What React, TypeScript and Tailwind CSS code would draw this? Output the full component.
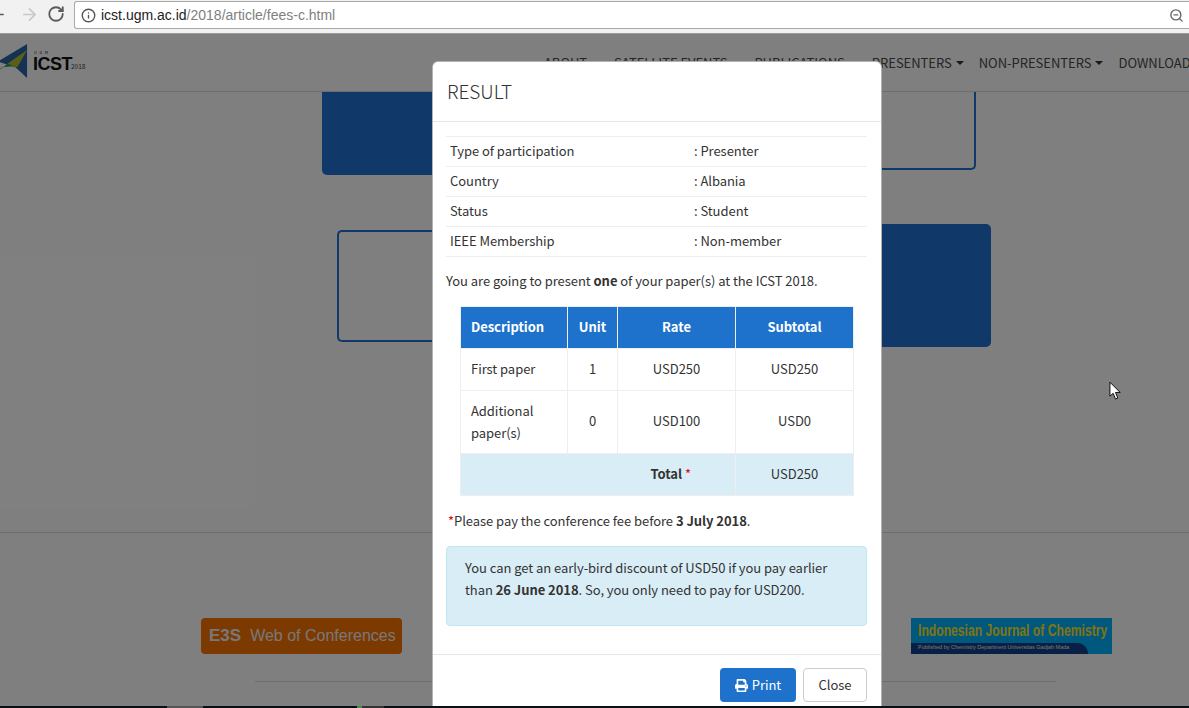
import { ArrowLeft, ArrowRight, Info, RotateCw, ZoomOut } from 'lucide-react'
import { FaPrint } from 'react-icons/fa'

const infoRows = [
  ['Type of participation', ': Presenter'],
  ['Country', ': Albania'],
  ['Status', ': Student'],
  ['IEEE Membership', ': Non-member'],
]

const navItems = [
  { label: 'ABOUT', caret: true },
  { label: 'SATELLITE EVENTS', caret: true },
  { label: 'PUBLICATIONS', caret: true },
  { label: 'PRESENTERS', caret: true },
  { label: 'NON-PRESENTERS', caret: true },
  { label: 'DOWNLOAD', caret: false },
]

function BrowserBar() {
  return (
    <div className="h-[34px] shrink-0 bg-[#f1f1f1] border-b border-[#9c9c9c] flex items-start">
      <div className="w-[74px] h-[28px] shrink-0 flex items-center relative">
        <ArrowLeft className="absolute left-[-12px] top-[5px] w-[19px] h-[19px] text-[#5a5a5a]" strokeWidth={2.2} />
        <ArrowRight className="absolute left-[20px] top-[5px] w-[19px] h-[19px] text-[#c8c8c8]" strokeWidth={2.2} />
        <RotateCw className="absolute left-[47px] top-[5px] w-[18px] h-[18px] text-[#5a5a5a]" strokeWidth={2.4} />
      </div>
      <div className="flex-1 h-[28px] mt-px bg-white border border-[#a9a9a9] border-r-0 rounded-l-[3px] flex items-center pl-[6px] pr-[5px] font-['Liberation_Sans',sans-serif] text-[14px]">
        <Info className="w-[15px] h-[15px] text-[#555] shrink-0" strokeWidth={2.2} />
        <span className="ml-[5px] text-[#222]">icst.ugm.ac.id</span>
        <span className="text-[#808080]">/2018/article/fees-c.html</span>
        <ZoomOut className="ml-auto w-[15px] h-[15px] text-[#666]" strokeWidth={2.2} />
      </div>
    </div>
  )
}

function Logo() {
  return (
    <div className="w-[90px] h-full shrink-0 relative">
      <svg viewBox="0 0 30 36" className="absolute left-0 top-[10px] w-[29px] h-[35px]">
        <path d="M-2 18 L28 0 L28 35 L16 24 Z" fill="#2a62a8" />
        <path d="M8 20 L28 6 L18 24 L12 23 Z" fill="#b5bf2e" />
        <path d="M-3 29 L8 20 L14 23 L2 24 Z" fill="#2f9e5b" />
      </svg>
      <span className="absolute left-[34px] top-[16px] text-[4px] leading-[5px] tracking-[2.5px] text-[#222]">UGM</span>
      <span className="absolute left-[33px] top-[18px] text-[18px] leading-[24px] font-bold tracking-[-0.5px] text-[#111] font-['Liberation_Sans',sans-serif]">ICST</span>
      <span className="absolute left-[71px] top-[26px] text-[6.5px] leading-[12px] text-[#444]">2018</span>
    </div>
  )
}

function PageBehind() {
  return (
    <div className="absolute inset-0 bg-white flex flex-col">
      <div className="h-[58px] shrink-0 border-b border-[#ddd] flex items-center">
        <Logo />
        <div className="ml-[454px] mt-px flex items-center gap-[15px] shrink-0 whitespace-nowrap text-[13px] tracking-[-0.03px] text-[#4a4a4a]">
          {navItems.map((item) => (
            <span key={item.label} className="flex items-center gap-[4px]">
              {item.label}
              {item.caret && (
                <span className="w-0 h-0 border-x-[4.5px] border-x-transparent border-t-[4.5px] border-t-[#333]" />
              )}
            </span>
          ))}
        </div>
      </div>

      <div className="flex pl-[322px]">
        <div className="w-[328px] h-[83px] bg-[#2072d4] rounded-bl-[5px]" />
        <div className="w-[326px] h-[78px] border-2 border-t-0 border-[#1f74d0] rounded-br-[5px]" />
      </div>

      <div className="flex items-center pl-[337px] mt-[49px]">
        <div className="w-[313px] h-[112px] border-2 border-r-0 border-[#1f74d0] rounded-l-[5px]" />
        <div className="w-[341px] h-[123px] bg-[#2072d4] rounded-r-[5px]" />
      </div>

      <div className="mt-[185px] border-t border-[#ddd] pt-[85px] pl-[201px] pr-[77px] flex justify-between">
        <div className="w-[201px] h-[36px] rounded-[4px] bg-[#f97200] flex items-center pl-[8px] font-['Liberation_Sans',sans-serif]">
          <span className="text-[17px] font-bold text-[#f0f0f0]">E3S</span>
          <span className="ml-[9px] text-[16px] whitespace-nowrap text-[#f0f0f0]">Web of Conferences</span>
        </div>
        <div className="w-[201px] h-[36px] bg-[#00b0ff] relative overflow-hidden font-['Liberation_Sans',sans-serif]">
          <div className="absolute left-0 bottom-0 w-[177px] h-[11px] bg-[#10408c] rounded-tr-[40px]" />
          <div className="absolute left-[7px] top-[5px] text-[16px] leading-[16px] font-bold text-[#ffe820] whitespace-nowrap origin-left scale-x-[0.76]">Indonesian Journal of Chemistry</div>
          <div className="absolute left-[7px] top-[26px] text-[5.5px] leading-[7px] text-[#e8e8e8] whitespace-nowrap">Published by Chemistry Department Universitas Gadjah Mada</div>
        </div>
      </div>

      <div className="mt-[27px] ml-[255px] w-[801px] border-t border-[#ddd]" />
    </div>
  )
}

function ResultModal() {
  return (
    <div className="absolute left-[432px] top-[27px] w-[450px] h-[700px] bg-white border border-black/30 rounded-[6px] text-[#333] text-[13px] leading-[22px] tracking-[-0.05px]">
      <div className="h-[60px] border-b border-[#e5e5e5] flex items-center pl-[14px] pb-[2px]">
        <h4 className="text-[19px] font-light text-[#333]">RESULT</h4>
      </div>

      <div className="pl-[13px] pr-[14px] pt-[14px]">
        <table className="w-[421px] border-collapse">
          <tbody>
            {infoRows.map(([label, value]) => (
              <tr key={label} className="h-[30px] border-y border-[#eee]">
                <td className="w-[248px] pl-[4px] pt-0 pb-[2px]">{label}</td>
                <td className="pt-0 pb-[2px]">{value}</td>
              </tr>
            ))}
          </tbody>
        </table>

        <p className="mt-[13px]">
          You are going to present <b>one</b> of your paper(s) at the ICST 2018.
        </p>

        <table className="ml-[14px] mt-[14px] w-[394px] border-collapse table-fixed">
          <thead>
            <tr className="h-[42px] bg-[#1e72cc] text-white font-bold">
              <th className="w-[107px] px-[10px] pb-[2px] text-left border border-[#eee]">Description</th>
              <th className="w-[50px] pb-[2px] border border-[#eee]">Unit</th>
              <th className="w-[118px] pb-[2px] border border-[#eee]">Rate</th>
              <th className="pb-[2px] border border-[#eee]">Subtotal</th>
            </tr>
          </thead>
          <tbody>
            <tr className="h-[42px]">
              <td className="px-[10px] pb-[2px] border border-[#eee]">First paper</td>
              <td className="text-center pb-[2px] border border-[#eee]">1</td>
              <td className="text-center pb-[2px] border border-[#eee]">USD250</td>
              <td className="text-center pb-[2px] border border-[#eee]">USD250</td>
            </tr>
            <tr className="h-[63px]">
              <td className="px-[10px] border border-[#eee]">Additional paper(s)</td>
              <td className="text-center pb-[2px] border border-[#eee]">0</td>
              <td className="text-center pb-[2px] border border-[#eee]">USD100</td>
              <td className="text-center pb-[2px] border border-[#eee]">USD0</td>
            </tr>
            <tr className="h-[42px] bg-[#d9edf7]">
              <td colSpan={3} className="text-right pr-[44px] pb-[2px] border border-[#eee]">
                <b>Total</b><span className="ml-[3px] text-red-600">*</span>
              </td>
              <td className="text-center pb-[2px] border border-[#eee]">USD250</td>
            </tr>
          </tbody>
        </table>

        <p className="mt-[14px] pl-[2px]">
          <span className="text-red-600">*</span>Please pay the conference fee before <b>3 July 2018</b>.
        </p>

        <div className="mt-[14px] h-[80px] bg-[#d9edf7] border border-[#bce8f1] rounded-[4px] pl-[18px] pr-[16px] pt-[10px]">
          You can get an early-bird discount of USD50 if you pay earlier than <b>26 June 2018</b>. So, you only need to pay for USD200.
        </div>
      </div>

      <div className="mt-[28px] border-t border-[#e5e5e5] pt-[13px] pr-[14px] flex justify-end gap-[7px]">
        <button className="w-[76px] h-[34px] rounded-[4px] bg-[#1e72cc] text-white flex items-center justify-center gap-[4px]">
          <FaPrint className="w-[13px] h-[13px]" />
          Print
        </button>
        <button className="w-[64px] h-[34px] rounded-[4px] bg-white border border-[#ccc] text-[#333]">Close</button>
      </div>
    </div>
  )
}

export default function App() {
  return (
    <div className="h-[708px] w-[1189px] overflow-hidden flex flex-col font-['Noto_Sans_CJK_SC','Noto_Sans',sans-serif]">
      <BrowserBar />
      <div className="flex-1 relative overflow-hidden">
        <PageBehind />
        <div className="absolute inset-0 bg-black/50" />
        <ResultModal />
        {/* mouse pointer */}
        <svg viewBox="0 0 14 22" className="absolute left-[1109px] top-[347px] w-[13px] h-[21px]">
          <path d="M1 1 L1 16 L4.5 13 L7 19 L9.5 18 L7 12 L12 12 Z" fill="#fff" stroke="#000" strokeWidth="1" />
        </svg>
      </div>
      {/* taskbar edge */}
      <div className="h-[2px] shrink-0 bg-[#0a0f14] flex">
        <div className="ml-[167px] w-[36px] bg-[#555]" />
        <div className="ml-[154px] w-[5px] bg-[#3f8f4a]" />
        <div className="w-[22px] bg-[#333]" />
      </div>
    </div>
  )
}
